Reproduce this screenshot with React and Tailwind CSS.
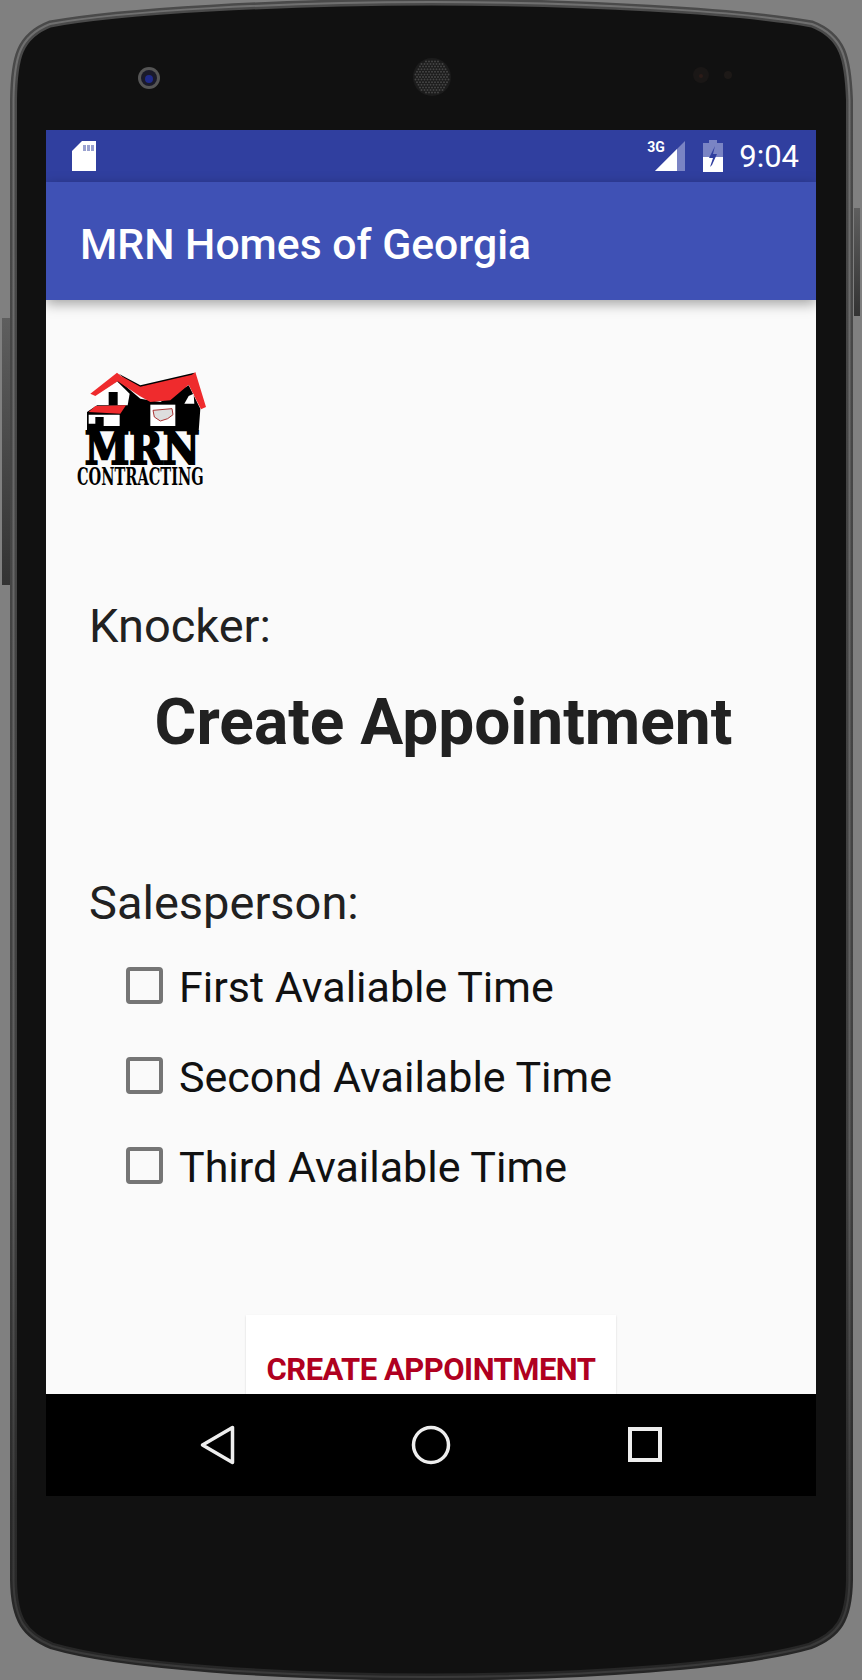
import React from 'react';

const speakerDots = [];
for (let row = -9; row <= 9; row++) {
  for (let col = -9; col <= 9; col++) {
    const x = col * 3 + (row % 2 ? 1.5 : 0);
    const y = row * 2.6;
    if (x * x + y * y < 18 * 18) speakerDots.push([x, y]);
  }
}

const BODY =
  'M13.5 100C14 58 19 36 50 24C120 11 280 2 431 2C580 2 740 11 812 24C843 36 848 58 849.5 100L849.5 1580C849 1620 838 1635 810 1646C740 1666 580 1677 431 1677C280 1677 120 1666 52 1646C25 1635 14 1620 13.5 1580Z';

function PhoneShell() {
  return (
    <svg className="absolute inset-0" width="862" height="1680" viewBox="0 0 862 1680">
      <defs>
        <linearGradient id="rimOuter" x1="0" y1="0" x2="0" y2="1">
          <stop offset="0" stopColor="#4a4a4a" />
          <stop offset="0.7" stopColor="#404040" />
          <stop offset="0.9" stopColor="#2a2a2a" />
          <stop offset="1" stopColor="#262626" />
        </linearGradient>
        <linearGradient id="rimInner" x1="0" y1="0" x2="0" y2="1">
          <stop offset="0" stopColor="#707070" />
          <stop offset="0.7" stopColor="#5c5c5c" />
          <stop offset="0.9" stopColor="#3a3a3a" />
          <stop offset="1" stopColor="#3a3a3a" />
        </linearGradient>
        <linearGradient id="sideKey" x1="0" y1="0" x2="0" y2="1">
          <stop offset="0" stopColor="#5e5e5e" />
          <stop offset="1" stopColor="#333" />
        </linearGradient>
      </defs>
      <rect x="2" y="318" width="9" height="267" fill="url(#sideKey)" />
      <rect x="854" y="208" width="6" height="108" fill="url(#sideKey)" />
      <path d={BODY} fill="#111111" stroke="url(#rimOuter)" strokeWidth="7" />
      <path d={BODY} fill="none" stroke="url(#rimInner)" strokeWidth="2" />
      {/* camera */}
      <circle cx="149" cy="78" r="11" fill="#555" />
      <circle cx="149" cy="78" r="8" fill="#1a1a2a" />
      <circle cx="149" cy="79" r="4" fill="#1f2a8a" />
      {/* speaker */}
      <g transform="translate(432 77)">
        <circle r="19" fill="#1c1c1c" />
        {speakerDots.map(([x, y], i) => (
          <circle key={i} cx={x} cy={y} r="1" fill="#444" />
        ))}
      </g>
      {/* sensors */}
      <circle cx="701" cy="75" r="8" fill="#1a1716" />
      <circle cx="701" cy="76" r="2" fill="#2c1c18" />
      <circle cx="728" cy="75" r="4" fill="#1d1917" />
    </svg>
  );
}

function SdCard() {
  return (
    <svg width="24" height="30" viewBox="0 0 24 30">
      <path d="M10 0H24V30H0V10Z" fill="#fff" />
      <rect x="11" y="4" width="3" height="6" fill="#9aa2d0" />
      <rect x="15" y="4" width="3" height="6" fill="#9aa2d0" />
      <rect x="19" y="4" width="3" height="6" fill="#9aa2d0" />
    </svg>
  );
}

function Signal() {
  return (
    <div className="relative w-[38px] h-[32px]">
      <span className="absolute left-0 top-[-2px] text-[14px] leading-[18px] font-bold text-white">3G</span>
      <svg className="absolute left-[8px] top-[1px]" width="30" height="30" viewBox="0 0 30 30">
        <path d="M0 30L30 0V30Z" fill="#7a84c4" />
        <path d="M0 30L22 8V30Z" fill="#fff" />
      </svg>
    </div>
  );
}

function Battery() {
  return (
    <svg width="20" height="32" viewBox="0 0 20 32">
      <path d="M6 0H14V3H20V32H0V3H6Z" fill="#7a84c4" />
      <path d="M0 17H20V32H0Z" fill="#fff" />
      <path d="M12 6L6 18H10L7 27L9 25L14 14H10Z" fill="#303f9f" />
    </svg>
  );
}

function Logo() {
  return (
    <svg width="130" height="115" viewBox="50 50 390 345" className="block overflow-visible">
      <path d="M175 75L240 130L300 140L385 90L420 160L415 228H80V170L110 150L110 120Z" fill="#000" />
      <path d="M175 55L240 90L402 52L390 85L300 125L240 110Z" fill="#000" />
      <path d="M108 118L170 78L208 115L202 150H108Z" fill="#fff" />
      <rect x="145" y="110" width="27" height="40" fill="#000" />
      <path d="M90 115L170 52L182 62L240 94L395 58L405 50L437 155L422 162L385 88L330 135L270 140L238 122L172 78L105 122Z" fill="#ef2b2d" />
      <path d="M85 170L105 152L197 150L180 175Z" fill="#ef2b2d" />
      <path d="M85 178H178V212H130V185H105V205H85Z" fill="#fff" />
      <path d="M385 122L400 115L402 145H372Z" fill="#fff" />
      <rect x="270" y="148" width="75" height="64" fill="#fff" />
      <path d="M278 165L335 160L338 178L322 190L300 197L282 185Z" fill="#ddd" stroke="#a33" strokeWidth="3" />
      <text x="73" y="325" fontFamily="'DejaVu Serif', serif" fontWeight="700" fontSize="137" textLength="345" lengthAdjust="spacingAndGlyphs" fill="#000" stroke="#000" strokeWidth="6">MRN</text>
      <text x="50" y="389" fontFamily="'DejaVu Serif', serif" fontWeight="700" fontSize="70" textLength="380" lengthAdjust="spacingAndGlyphs" fill="#000">CONTRACTING</text>
    </svg>
  );
}

function CheckRow({ label }) {
  return (
    <div className="flex items-center h-[90px]">
      <div className="w-[37px] h-[37px] mt-[-4px] rounded-[4px] border-[4px] border-[#757575]" />
      <span className="ml-[16px] text-[43px] leading-[50px] text-[#111]">{label}</span>
    </div>
  );
}

function NavBar() {
  return (
    <div className="h-[102px] bg-black flex items-center justify-center shrink-0">
      <svg width="770" height="102" viewBox="0 0 770 102">
        <path d="M186.5 33.5V68.5L156.5 51Z" fill="none" stroke="#eee" strokeWidth="3.5" strokeLinejoin="round" />
        <circle cx="385" cy="51" r="17.5" fill="none" stroke="#eee" strokeWidth="3.5" />
        <rect x="584" y="35" width="30" height="31" fill="none" stroke="#eee" strokeWidth="4" />
      </svg>
    </div>
  );
}

export default function App() {
  return (
    <div className="relative w-[862px] h-[1680px] bg-[#808080] overflow-hidden font-['Roboto',sans-serif]">
      <PhoneShell />
      <div className="relative ml-[46px] pt-[130px] w-[770px]">
        <div className="h-[1366px] flex flex-col overflow-hidden">
          <div className="h-[52px] bg-[#303f9f] shrink-0 flex items-center pl-[26px] pr-[18px]">
            <SdCard />
            <div className="ml-auto flex items-center">
              <Signal />
              <div className="ml-[18px]"><Battery /></div>
              <span className="ml-[15px] pt-[1px] text-[31px] leading-[32px] text-white translate-x-[1px]">9:04</span>
            </div>
          </div>
          <div className="relative z-10 h-[118px] bg-[#3f51b5] shrink-0 flex items-center pl-[34px] pt-[6px] shadow-[0_4px_12px_rgba(0,0,0,0.35)]">
            <h1 className="text-[42.7px] leading-[48px] font-medium text-white">MRN Homes of Georgia</h1>
          </div>
          <div className="flex-1 min-h-0 bg-[#fafafa] overflow-hidden">
            <div className="pt-[72px] pl-[31px]"><Logo /></div>
            <p className="mt-[115px] ml-[43px] text-[47px] leading-[48px] text-[#212121]">Knocker:</p>
            <h2 className="mt-[37px] text-center text-[64px] leading-[72px] font-bold text-[#212121] pl-[25px]">Create Appointment</h2>
            <p className="mt-[120px] ml-[43px] text-[47px] leading-[48px] text-[#212121]">Salesperson:</p>
            <div className="mt-[15px] ml-[80px]">
              <CheckRow label="First Avaliable Time" />
              <CheckRow label="Second Available Time" />
              <CheckRow label="Third Available Time" />
            </div>
            <div className="mt-[103px] mx-auto w-[370px] h-[106px] pt-[3px] bg-white shadow-[0_1px_2px_rgba(0,0,0,0.15)] flex items-center justify-center">
              <span className="text-[31px] leading-[36px] font-bold tracking-[-0.5px] text-[#b00020] uppercase">Create Appointment</span>
            </div>
          </div>
          <NavBar />
        </div>
      </div>
    </div>
  );
}
